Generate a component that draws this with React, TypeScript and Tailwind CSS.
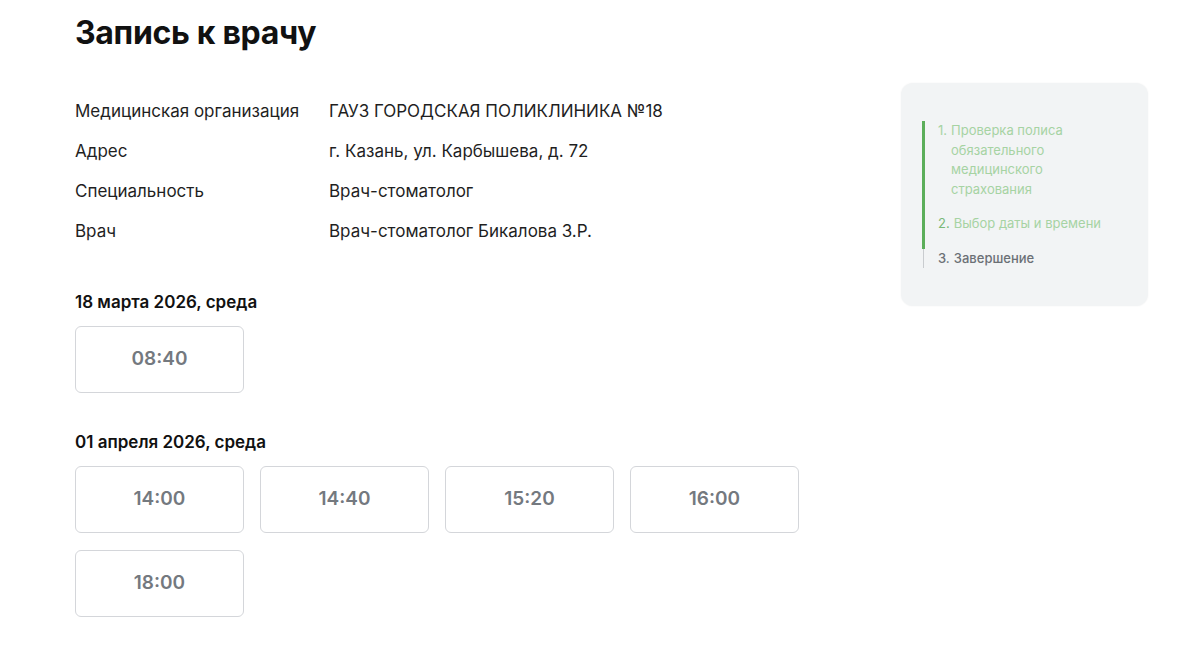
const info = [
  { label: "Медицинская организация", value: "ГАУЗ ГОРОДСКАЯ ПОЛИКЛИНИКА №18" },
  { label: "Адрес", value: "г. Казань, ул. Карбышева, д. 72" },
  { label: "Специальность", value: "Врач-стоматолог" },
  { label: "Врач", value: "Врач-стоматолог Бикалова З.Р." },
];

const days = [
  { date: "18 марта 2026, среда", slots: ["08:40"] },
  { date: "01 апреля 2026, среда", slots: ["14:00", "14:40", "15:20", "16:00", "18:00"] },
];

function Slot({ time }: { time: string }) {
  return (
    <button className="flex h-[67px] items-center justify-center rounded-md border border-[#d4d6da] bg-white text-[19px] font-semibold text-[#74797f]">
      {time}
    </button>
  );
}

export default function App() {
  return (
    <div className="min-h-screen bg-white pl-[75px] pr-[52px] font-['Inter','Noto_Sans',sans-serif] text-[#1a1a1a]">
      <div className="flex h-[66px] items-center">
        <h1 className="text-[32px] font-bold tracking-[-0.01em] text-[#111]">Запись к врачу</h1>
      </div>
      <div className="flex items-start justify-between">
        <div className="pt-[26px]">
          <div className="flex flex-col">
            {info.map((row) => (
              <div key={row.label} className="flex h-10 items-center text-[17px] text-[#1f1f1f]">
                <div className="w-[254px]">{row.label}</div>
                <div>{row.value}</div>
              </div>
            ))}
          </div>
          {days.map((day, i) => (
            <div key={day.date} className={i === 0 ? "mt-[38px]" : "mt-[37px]"}>
              <div className="text-[17px] font-semibold leading-6 text-[#111]">{day.date}</div>
              <div className="mt-3 grid w-[724px] grid-cols-[repeat(4,169px)] gap-x-4 gap-y-[17px]">
                {day.slots.map((s) => (
                  <Slot key={s} time={s} />
                ))}
              </div>
            </div>
          ))}
        </div>
        <aside className="mt-[17px] w-[247px] rounded-xl bg-[#f2f4f5] px-[21px] py-[38px] shadow-[0_0_2px_rgba(0,0,0,0.06)]">
          <div className="text-[13px] leading-[19.5px]">
            <div className="flex border-l-[3px] border-[#5cae5a] pb-[15px] pl-[13px] text-[#a6d3a3]">
              <span className="mr-1">1.</span>
              <span>
                Проверка полиса
                <br />
                обязательного
                <br />
                медицинского
                <br />
                страхования
              </span>
            </div>
            <div className="flex border-l-[3px] border-[#5cae5a] pb-[15px] pl-[13px] text-[#a6d3a3]">
              <span className="mr-1 text-[#79b977]">2.</span>
              <span>Выбор даты и времени</span>
            </div>
            <div className="ml-px flex border-l border-[#c9cccf] pl-[14px] font-medium text-[#6b7075]">
              <span className="mr-1">3.</span>
              <span>Завершение</span>
            </div>
          </div>
        </aside>
      </div>
    </div>
  );
}
